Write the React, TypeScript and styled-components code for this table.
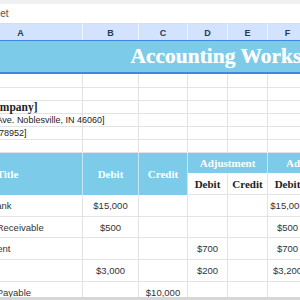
import styled, { createGlobalStyle } from "styled-components";

const GlobalStyle = createGlobalStyle`
  html, body {
    margin: 0;
    padding: 0;
    width: 300px;
    height: 300px;
    overflow: hidden;
    background: #ffffff;
  }
  #root {
    height: 300px;
  }
`;

const BLUE = "#7ccbe8";
const GRID = "#e3e3e3";
const SANS = `"Liberation Sans", Arial, sans-serif`;
const SERIF = `"Liberation Serif", "Times New Roman", serif`;

const Page = styled.div`
  height: 300px;
  display: flex;
  flex-direction: column;
  overflow: hidden;
`;

const Viewport = styled.div`
  flex: 1;
  overflow: hidden;
`;

const ScrollBar = styled.div`
  height: 3px;
  background: #d6d6d6;
`;

// the sheet is scrolled a little to the right, so column A starts off-screen
const Scrolled = styled.div`
  margin-left: -48px;
  width: max-content;
`;

const TopBar = styled.div`
  height: 23px;
  box-sizing: border-box;
  border-top: 4px solid #eef0f2;
  display: flex;
  align-items: center;
  padding-left: 9px;
  font-family: ${SANS};
  font-size: 10px;
  color: #555;
`;

const Grid = styled.div`
  display: grid;
  grid-template-columns: 131px 56px 49px repeat(8, 40px);
  grid-template-rows: 17px 34px 14px 13px 13px 13px 13px 13px 20px 22px 22px 21px 22px 22px 22px;
`;

const ColHead = styled.div<{ $first?: boolean }>`
  box-sizing: border-box;
  background: #d3e3fd;
  border-top: 1px solid #d9dde3;
  border-right: 1px solid #eef3fc;
  display: flex;
  align-items: center;
  justify-content: center;
  padding-top: 1px;
  padding-left: ${({ $first }) => ($first ? "7px" : "0")};
  font-family: ${SANS};
  font-weight: bold;
  font-size: 9px;
  color: #243a5e;
`;

const TitleCell = styled.div`
  grid-column: 1 / -1;
  box-sizing: border-box;
  background: ${BLUE};
  border-top: 1px solid #3f87e4;
  border-bottom: 2px solid #3f87e4;
  display: flex;
  align-items: center;
  justify-content: center;
  padding-left: 10px;
  font-family: ${SERIF};
  font-weight: bold;
  font-size: 21.5px;
  color: #ffffff;
  text-shadow: 0 0 1px rgba(255, 255, 255, 0.6);
`;

const Cell = styled.div<{ $align?: "left" | "center" }>`
  box-sizing: border-box;
  border-right: 1px solid ${GRID};
  border-bottom: 1px solid ${GRID};
  display: flex;
  align-items: center;
  justify-content: ${({ $align }) => ($align === "left" ? "flex-start" : "center")};
  padding: 0 3px;
  font-family: ${SANS};
  font-size: 9.5px;
  color: #333;
  white-space: nowrap;
  min-width: 0;
`;

const InfoCell = styled(Cell)<{ $bold?: boolean }>`
  overflow: visible;
  font-family: ${({ $bold }) => ($bold ? SERIF : SANS)};
  font-weight: ${({ $bold }) => ($bold ? "bold" : "normal")};
  font-size: ${({ $bold }) => ($bold ? "11.5px" : "9px")};
  color: #222;
  z-index: 1;
`;

const HeadCell = styled.div<{ $rows?: number; $cols?: number; $align?: "left" | "center" }>`
  grid-row: span ${({ $rows }) => $rows || 1};
  grid-column: span ${({ $cols }) => $cols || 1};
  box-sizing: border-box;
  background: ${BLUE};
  border-right: 1px solid rgba(255, 255, 255, 0.55);
  display: flex;
  align-items: center;
  justify-content: ${({ $align }) => ($align === "left" ? "flex-start" : "center")};
  padding: 0 3px;
  font-family: ${SERIF};
  font-weight: bold;
  font-size: 11px;
  color: #ffffff;
  white-space: nowrap;
`;

const SubHead = styled.div`
  box-sizing: border-box;
  border-right: 1px solid ${GRID};
  border-bottom: 1px solid ${GRID};
  display: flex;
  align-items: center;
  justify-content: center;
  font-family: ${SERIF};
  font-weight: bold;
  font-size: 11px;
  color: #1d1d1d;
`;

const columns = ["A", "B", "C", "D", "E", "F", "G", "H", "I", "J", "K"];

const groups = ["Adjustment", "Adjusted", "Income Statement", "Balance Sheet"];

const info = [
  { text: "", bold: false },
  { text: "", bold: false },
  { text: "[Your Company]", bold: true },
  { text: "[123 Main Ave. Noblesville, IN 46060]", bold: false },
  { text: "[(317) 555-78952]", bold: false },
  { text: "", bold: false },
];

// values for columns B..K
const accounts = [
  { title: "Cash in Bank", values: ["$15,000", "", "", "", "$15,000", "", "", "", "$15,000", ""] },
  { title: "Accounts Receivable", values: ["$500", "", "", "", "$500", "", "", "", "$500", ""] },
  { title: "Prepaid Rent", values: ["", "", "$700", "", "$700", "", "", "", "$700", ""] },
  { title: "Supplies", values: ["$3,000", "", "$200", "", "$3,200", "", "", "", "$3,200", ""] },
  { title: "Accounts Payable", values: ["", "$10,000", "", "", "", "$10,000", "", "", "", "$10,000"] },
  { title: "Notes Payable", values: ["", "$5,000", "", "", "", "$5,000", "", "", "", "$5,000"] },
];

function App() {
  return (
    <Page>
      <GlobalStyle />
      <Viewport>
        <Scrolled>
          <TopBar>Worksheet</TopBar>
          <Grid>
            {columns.map((col, ci) => (
              <ColHead key={col} $first={ci === 0}>
                {col}
              </ColHead>
            ))}

            <TitleCell>Accounting Worksheet</TitleCell>

            {info.map((row, index) =>
              columns.map((col, ci) =>
                ci === 0 ? (
                  <InfoCell key={`${index}-${col}`} $align="left" $bold={row.bold}>
                    {row.text}
                  </InfoCell>
                ) : (
                  <Cell key={`${index}-${col}`} />
                ),
              ),
            )}

            <HeadCell $rows={2} $align="left">
              Account Title
            </HeadCell>
            <HeadCell $rows={2}>Debit</HeadCell>
            <HeadCell $rows={2}>Credit</HeadCell>
            {groups.map((group) => (
              <HeadCell key={group} $cols={2}>
                {group}
              </HeadCell>
            ))}
            {groups.map((group) => [
              <SubHead key={`${group}-d`}>Debit</SubHead>,
              <SubHead key={`${group}-c`}>Credit</SubHead>,
            ])}

            {accounts.map((account) => [
              <Cell key={account.title} $align="left">
                {account.title}
              </Cell>,
              ...account.values.map((value, vi) => <Cell key={`${account.title}-${vi}`}>{value}</Cell>),
            ])}
          </Grid>
        </Scrolled>
      </Viewport>
      <ScrollBar />
    </Page>
  );
}

export default App;
